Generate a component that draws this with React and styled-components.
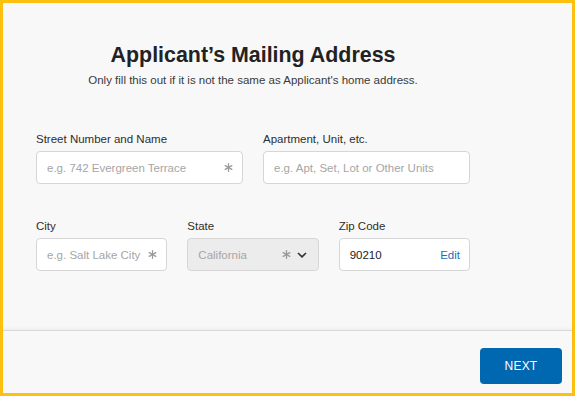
import React from "react";
import styled, { createGlobalStyle } from "styled-components";

const GlobalStyle = createGlobalStyle`
  html, body {
    margin: 0;
    padding: 0;
    background: #fff;
  }
  body {
    font-family: "Liberation Sans", Arial, sans-serif;
  }
  * {
    box-sizing: border-box;
  }
`;

const Frame = styled.div`
  width: 575px;
  height: 396px;
  border: 3px solid #fdc010;
  background: #f8f8f8;
  display: flex;
  flex-direction: column;
`;

const Main = styled.div`
  flex: 1;
  padding: 39px 0 0 33px;
`;

const Column = styled.div`
  width: 434px;
  display: flex;
  flex-direction: column;
`;

const Title = styled.h1`
  margin: 0;
  text-align: center;
  font-size: 21.4px;
  font-weight: bold;
  color: #222;
  line-height: 26px;
`;

const Subtitle = styled.p`
  margin: 5px 0 0 0;
  text-align: center;
  font-size: 11.5px;
  color: #3a3a3a;
  line-height: 14px;
`;

const Row = styled.div`
  display: grid;
  grid-template-columns: ${(p) => p.$cols};
  column-gap: 20px;
  margin-top: ${(p) => p.$top}px;
`;

const Field = styled.div`
  display: flex;
  flex-direction: column;
`;

const Label = styled.label`
  font-size: 11.5px;
  color: #2e2e2e;
  line-height: 14px;
  margin-bottom: 5px;
`;

const Box = styled.div`
  height: 33px;
  border: 1px solid #d6d6d6;
  border-radius: 4px;
  background: ${(p) => (p.$disabled ? "#ececec" : "#fff")};
  display: flex;
  align-items: center;
  padding: 0 ${(p) => (p.$select ? 11 : 9)}px 0 10px;
  font-size: 11.5px;
`;

const Text = styled.span`
  flex: 1;
  color: ${(p) => (p.$value ? "#222" : "#a6a6a6")};
  white-space: nowrap;
`;

const Star = styled.svg`
  flex: none;
`;

const EditLink = styled.span`
  color: #1a6fb8;
  font-size: 11.5px;
`;

const Chevron = styled.svg`
  margin-left: 6px;
  flex: none;
`;

const Footer = styled.div`
  height: 63px;
  border-top: 1px solid #d9d9d9;
  box-shadow: 0 -2px 3px rgba(0, 0, 0, 0.04);
  display: flex;
  align-items: flex-start;
  justify-content: flex-end;
  padding: 17px 10px 0 0;
`;

const NextButton = styled.button`
  width: 82px;
  height: 36px;
  border: none;
  border-radius: 4px;
  background: #0067b1;
  color: #fff;
  font-family: inherit;
  font-size: 12px;
  letter-spacing: 0.2px;
`;

const Asterisk = () => (
  <Star width="9" height="9" viewBox="0 0 9 9">
    <g stroke="#9a9a9a" strokeWidth="1.3" strokeLinecap="round">
      <path d="M4.5 0.7v7.6" />
      <path d="M1.2 2.6l6.6 3.8" />
      <path d="M1.2 6.4l6.6 -3.8" />
    </g>
  </Star>
);

const Input = ({ placeholder, value, required, disabled, edit, select }) => (
  <Box $disabled={disabled} $select={select}>
    <Text $value={!!value}>{value || placeholder}</Text>
    {required && <Asterisk />}
    {edit && <EditLink>Edit</EditLink>}
    {select && (
      <Chevron width="10" height="6" viewBox="0 0 10 6">
        <path d="M1 1l4 3.8L9 1" fill="none" stroke="#333" strokeWidth="1.6" />
      </Chevron>
    )}
  </Box>
);

export default function App() {
  return (
    <>
      <GlobalStyle />
      <Frame>
        <Main>
          <Column>
            <Title>Applicant’s Mailing Address</Title>
            <Subtitle>
              Only fill this out if it is not the same as Applicant's home address.
            </Subtitle>
            <Row $cols="1fr 1fr" $top={45}>
              <Field>
                <Label>Street Number and Name</Label>
                <Input placeholder="e.g. 742 Evergreen Terrace" required />
              </Field>
              <Field>
                <Label>Apartment, Unit, etc.</Label>
                <Input placeholder="e.g. Apt, Set, Lot or Other Units" />
              </Field>
            </Row>
            <Row $cols="1fr 1fr 1fr" $top={35}>
              <Field>
                <Label>City</Label>
                <Input placeholder="e.g. Salt Lake City" required />
              </Field>
              <Field>
                <Label>State</Label>
                <Input placeholder="California" required disabled select />
              </Field>
              <Field>
                <Label>Zip Code</Label>
                <Input value="90210" edit />
              </Field>
            </Row>
          </Column>
        </Main>
        <Footer>
          <NextButton>NEXT</NextButton>
        </Footer>
      </Frame>
    </>
  );
}
